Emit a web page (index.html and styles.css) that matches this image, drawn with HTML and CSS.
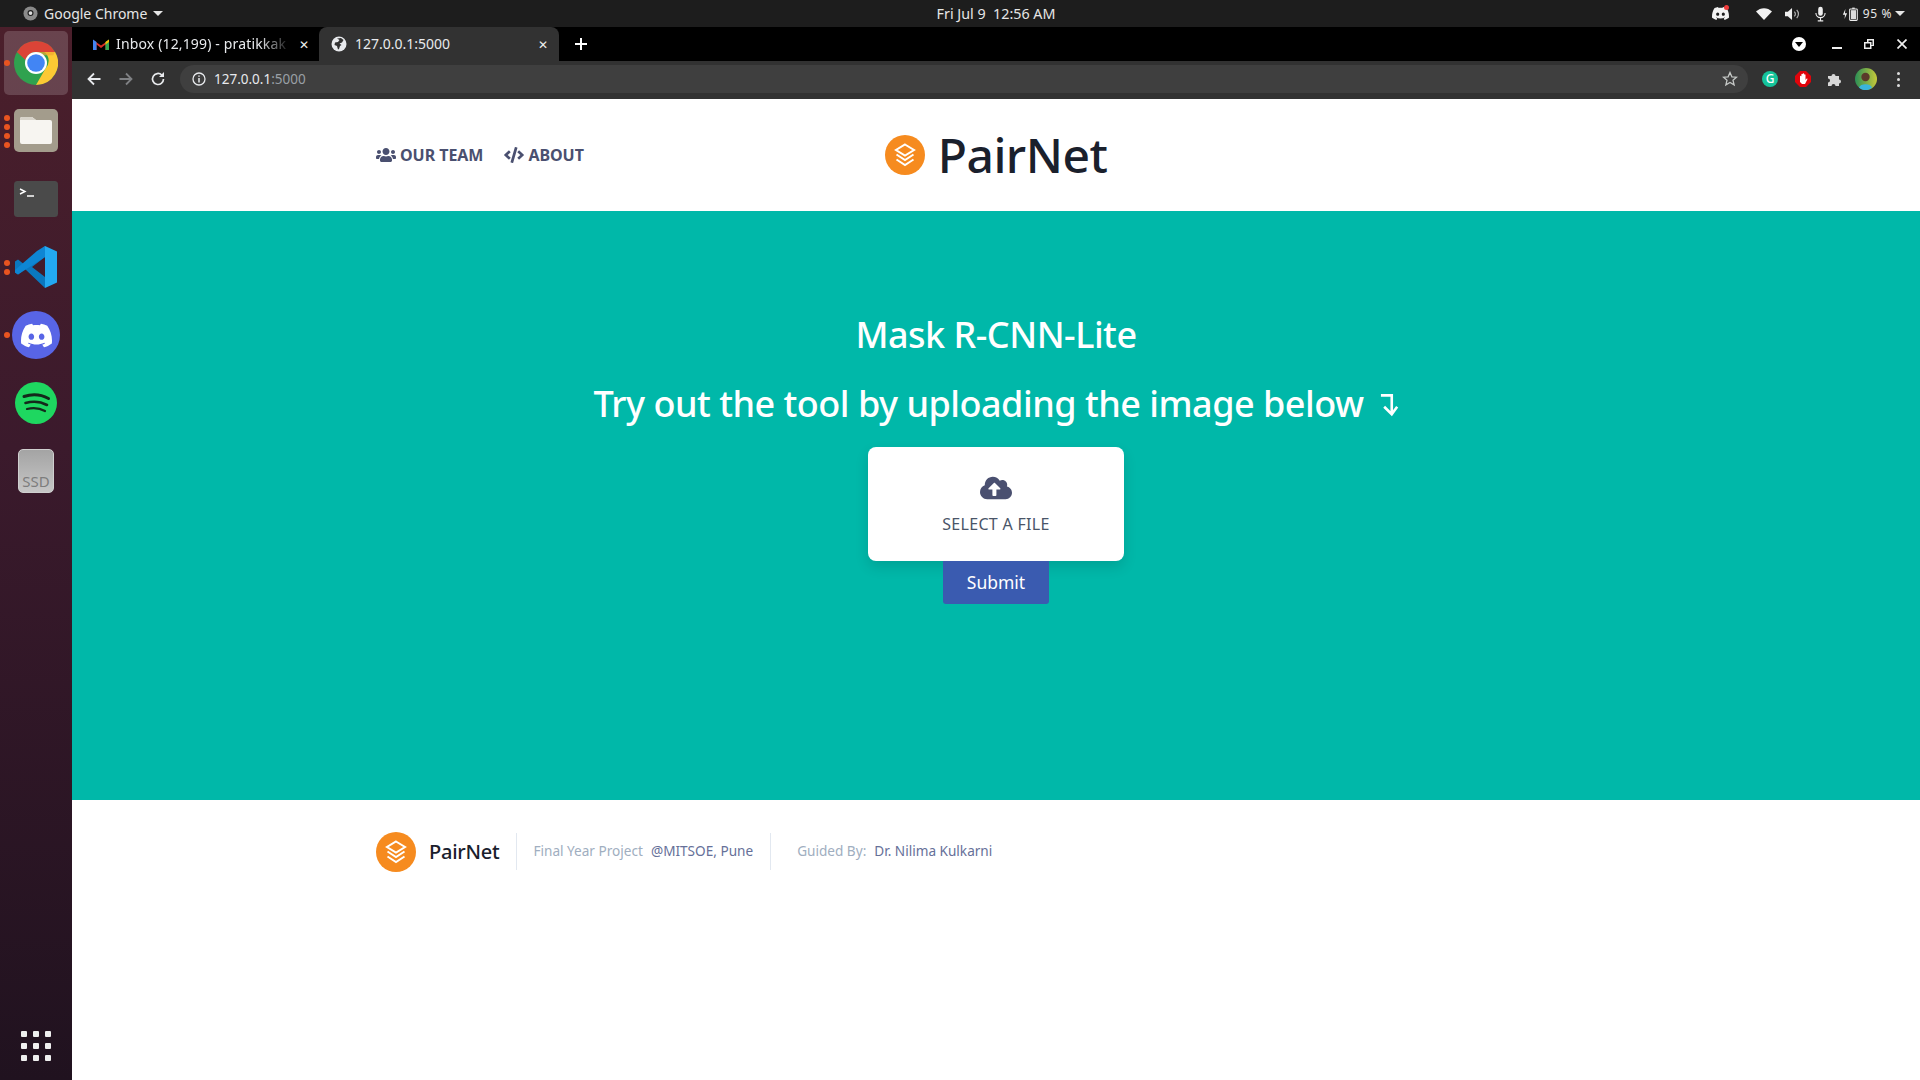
FILE: index.html
```html
<!DOCTYPE html>
<html lang="en">
<head>
<meta charset="utf-8">
<title>PairNet</title>
<link rel="stylesheet" href="styles.css">
</head>
<body>
<svg class="defs" width="0" height="0" aria-hidden="true">
  <symbol id="logo" viewBox="0 0 40 40">
    <circle cx="20" cy="20" r="20" fill="#f68b1f"/>
    <g fill="none" stroke="#fff" stroke-linejoin="miter">
      <path d="M20 9.500 29 15 20 20.500 11 15Z" stroke-width="2"/>
      <path d="M11.500 19.500 20 25 28.500 19.500" stroke-width="2"/>
      <path d="M11.500 24.500 20 30 28.500 24.500" stroke-width="2"/>
    </g>
  </symbol>
  <symbol id="discord" viewBox="0 0 24 24">
    <path fill="currentColor" d="M20.317 4.3698a19.7913 19.7913 0 00-4.8851-1.5152.0741.0741 0 00-.0785.0371c-.211.3753-.4447.8648-.6083 1.2495-1.8447-.2762-3.68-.2762-5.4868 0-.1636-.3933-.4058-.8742-.6177-1.2495a.077.077 0 00-.0785-.037 19.7363 19.7363 0 00-4.8852 1.515.0699.0699 0 00-.0321.0277C.5334 9.0458-.319 13.5799.0992 18.0578a.0824.0824 0 00.0312.0561c2.0528 1.5076 4.0413 2.4228 5.9929 3.0294a.0777.0777 0 00.0842-.0276c.4616-.6304.8731-1.2952 1.226-1.9942a.076.076 0 00-.0416-.1057c-.6528-.2476-1.2743-.5495-1.8722-.8923a.077.077 0 01-.0076-.1277c.1258-.0943.2517-.1923.3718-.2914a.0743.0743 0 01.0776-.0105c3.9278 1.7933 8.18 1.7933 12.0614 0a.0739.0739 0 01.0785.0095c.1202.099.246.1981.3728.2924a.077.077 0 01-.0066.1276 12.2986 12.2986 0 01-1.873.8914.0766.0766 0 00-.0407.1067c.3604.698.7719 1.3628 1.225 1.9932a.076.076 0 00.0842.0286c1.961-.6067 3.9495-1.5219 6.0023-3.0294a.077.077 0 00.0313-.0552c.5004-5.177-.8382-9.6739-3.5485-13.6604a.061.061 0 00-.0312-.0286zM8.02 15.3312c-1.1825 0-2.1569-1.0857-2.1569-2.419 0-1.3332.9555-2.4189 2.157-2.4189 1.2108 0 2.1757 1.0952 2.1568 2.419 0 1.3332-.9555 2.4189-2.1569 2.4189zm7.9748 0c-1.1825 0-2.1569-1.0857-2.1569-2.419 0-1.3332.9554-2.4189 2.1569-2.4189 1.2108 0 2.1757 1.0952 2.1568 2.419 0 1.3332-.946 2.4189-2.1568 2.4189Z"/>
  </symbol>
  <symbol id="chrome" viewBox="0 0 48 48">
    <circle cx="24" cy="24" r="24" fill="#2fa24f"/>
    <path d="M24 0a24 24 0 0 1 20.800 12H24a12 12 0 0 0-11.500 8.600L3.200 12A24 24 0 0 1 24 0Z" fill="#db4437"/>
    <path d="M44.800 12A24 24 0 0 1 24 48l10.400-18a12 12 0 0 0-1.400-18Z" fill="#fcc934"/>
    <path d="M24 12h20.800l-2 3.500H31Z" fill="#f0a830" opacity=".7"/>
    <circle cx="24" cy="24" r="12" fill="#fff"/>
    <circle cx="24" cy="24" r="9.600" fill="#4285f4"/>
  </symbol>
  <symbol id="globe" viewBox="0 0 16 16">
    <circle cx="8" cy="8" r="7.500" fill="#e8eaed"/>
    <path d="M6 2.500 8.500 4 7 6 4 6.500 3.500 9 6 10l1 3.500 1-.5 1-3 1.500-1L8.500 7.500 11 6.500 12.500 4 10 2Z" fill="#323232"/>
  </symbol>
</svg>

<div class="desktop">
  <header class="topbar">
    <div class="top-left">
      <svg class="top-chrome" viewBox="0 0 16 16"><circle cx="8" cy="8" r="7.500" fill="#8a8a8a"/><circle cx="8" cy="7.500" r="3.200" fill="#1d1d1d"/><circle cx="8" cy="7.500" r="2" fill="#ddd"/></svg>
      <span>Google Chrome</span>
      <i class="caret"></i>
    </div>
    <div class="top-center">Fri Jul 9 &nbsp;12:56 AM</div>
    <div class="top-right">
      <span class="tray-discord">
        <svg class="tray-icon-discord" viewBox="0 0 24 24"><use href="#discord"/></svg>
        <i class="notify"></i>
      </span>
      <svg class="tray-wifi" viewBox="0 0 16 12"><path d="M0 3.500C4.500-1 11.500-1 16 3.500L8 12Z" fill="#f2f2f2"/></svg>
      <svg class="tray-sound" viewBox="0 0 16 14"><path d="M0 4.500h3L7.500.5v13L3 9.500H0Z" fill="#eee"/><path d="M10 4.500a3.500 3.500 0 0 1 0 5M12.500 2.500a6.500 6.500 0 0 1 0 9" fill="none" stroke="#bbb" stroke-width="1.200"/></svg>
      <svg class="tray-mic" viewBox="0 0 12 16"><rect x="3.500" y="0" width="5" height="10" rx="2.500" fill="#eee"/><path d="M1 7a5 5 0 0 0 10 0M6 12v3.500M3 15.500h6" fill="none" stroke="#eee" stroke-width="1.200"/></svg>
      <svg class="tray-batt" viewBox="0 0 20 16"><path d="M4 2 1 9h2.500L3 14l3-7H3.500Z" fill="#eee"/><rect x="9" y="2" width="9" height="13.500" rx="1" fill="none" stroke="#eee" stroke-width="1.200"/><rect x="12" y="0.500" width="3" height="1.500" fill="#eee"/><rect x="10.500" y="3.500" width="6" height="10.500" fill="#ddd"/></svg>
      <span class="batt-text">95 %</span>
      <i class="caret"></i>
    </div>
  </header>

  <div class="workspace">
    <nav class="dock">
      <div class="dock-item active">
        <i class="dot"></i>
        <svg class="ic-44" viewBox="0 0 48 48"><use href="#chrome"/></svg>
      </div>
      <div class="dock-item">
        <span class="dots"><i></i><i></i><i></i><i></i></span>
        <svg class="ic-44" viewBox="0 0 44 44">
          <rect x="0" y="0" width="44" height="43" rx="5" fill="#a39c8c"/>
          <path d="M6 10a2 2 0 0 1 2-2h10l4 3h14a2 2 0 0 1 2 2v20a2 2 0 0 1-2 2H8a2 2 0 0 1-2-2Z" fill="#f7f5f1"/>
          <path d="M6 10a2 2 0 0 1 2-2h10l4 3H6Z" fill="#d8d4ca"/>
        </svg>
      </div>
      <div class="dock-item">
        <svg class="ic-term" viewBox="0 0 44 36">
          <rect width="44" height="36" rx="3.500" fill="#4a4a4a"/>
          <path d="M6 8l5 2.500-5 2.500" fill="none" stroke="#fff" stroke-width="1.400"/>
          <path d="M13 15h7" stroke="#fff" stroke-width="1.500"/>
        </svg>
      </div>
      <div class="dock-item">
        <span class="dots"><i></i><i></i></span>
        <svg class="ic-42" viewBox="0 0 42 42">
          <path d="M30 0 10 19 3 13.500 0 15.500v11L3 28.500 10 23 30 42V31L17 21 30 11Z" fill="#0a78c0"/>
          <path d="M3 28.500 0 26.500 0 24 22 5 30 0V11Z" fill="#0e86d4"/>
          <path d="M30 0 42 5.500v31L30 42Z" fill="#23a9f2"/>
        </svg>
      </div>
      <div class="dock-item">
        <i class="dot"></i>
        <span class="discord-badge"><svg class="discord-glyph" viewBox="0 0 24 24"><use href="#discord"/></svg></span>
      </div>
      <div class="dock-item">
        <svg class="ic-42" viewBox="0 0 42 42">
          <circle cx="21" cy="21" r="21" fill="#1ed760"/>
          <g fill="none" stroke="#14291b" stroke-linecap="round">
            <path d="M9 14.500c8-2.500 17-2 24.500 2" stroke-width="3"/>
            <path d="M10.500 21c7-2 15-1.500 21.500 2" stroke-width="2.600"/>
            <path d="M12 27c6-1.500 12.500-1 18 2" stroke-width="2.200"/>
          </g>
        </svg>
      </div>
      <div class="dock-item">
        <div class="ssd">SSD</div>
      </div>
      <div class="dock-item grid-item">
        <div class="apps">
          <i></i><i></i><i></i><i></i><i></i><i></i><i></i><i></i><i></i>
        </div>
      </div>
    </nav>

    <div class="browser">
      <div class="tabstrip">
        <div class="tab">
          <svg class="favicon" viewBox="0 0 16 12"><path d="M0 12V2l8 5.500L16 2v10h-3.500V6.500L8 10 3.500 6.500V12Z" fill="#d93025"/><path d="M0 12V1.500L3.500 4v8Z" fill="#4285f4"/><path d="M12.500 12V4L16 1.500V12Z" fill="#34a853"/><path d="M12.500 4 16 1.500V4l-3.500 2.500Z" fill="#fbbc04"/></svg>
          <span class="tab-title fade">Inbox (12,199) - pratikkak</span>
          <span class="tab-x">&#x2715;</span>
        </div>
        <div class="tab current">
          <svg class="favicon globe" viewBox="0 0 16 16"><use href="#globe"/></svg>
          <span class="tab-title">127.0.0.1:5000</span>
          <span class="tab-x">&#x2715;</span>
        </div>
        <svg class="newtab" viewBox="0 0 12 12"><path d="M6 0v12M0 6h12" stroke="#fff" stroke-width="2"/></svg>
        <div class="win-controls">
          <span class="media-btn"><i></i></span>
          <svg class="win-min" viewBox="0 0 10 2"><rect width="10" height="2" fill="#eee"/></svg>
          <svg class="win-max" viewBox="0 0 10 10"><path d="M3 0h7v7H7.500v3H0V3h3Zm1.500 1.500V3h3v3h1V1.500ZM1.500 4.500v4h4.500v-4Z" fill="#eee" fill-rule="evenodd"/></svg>
          <svg class="win-close" viewBox="0 0 10 10"><path d="M.5.500l9 9M9.500.5l-9 9" stroke="#eee" stroke-width="1.700"/></svg>
        </div>
      </div>

      <div class="toolbar">
        <svg class="tb-icon" viewBox="0 0 16 16"><path d="M14.500 8H2.500M8 2.500 2.500 8 8 13.500" fill="none" stroke="#e8eaed" stroke-width="1.800"/></svg>
        <svg class="tb-icon" viewBox="0 0 16 16"><path d="M1.500 8h12M8 2.500 13.500 8 8 13.500" fill="none" stroke="#7f8184" stroke-width="1.800"/></svg>
        <svg class="tb-icon" viewBox="0 0 16 16"><path d="M13.500 8A5.500 5.500 0 1 1 11.800 4" fill="none" stroke="#e8eaed" stroke-width="1.700"/><path d="M14 1v5H9Z" fill="#e8eaed"/></svg>
        <div class="omnibox">
          <svg class="info" viewBox="0 0 14 14"><circle cx="7" cy="7" r="6" fill="none" stroke="#e8eaed" stroke-width="1.300"/><path d="M7 6v4.500M7 3.500v1.300" stroke="#e8eaed" stroke-width="1.500"/></svg>
          <span class="url">127.0.0.1<span class="url-dim">:5000</span></span>
          <svg class="star" viewBox="0 0 16 16"><path d="M8 1.500l1.900 4.300 4.600.4-3.500 3 1.100 4.600L8 11.400l-4.100 2.400L5 9.200l-3.500-3 4.600-.4Z" fill="none" stroke="#c4c7c5" stroke-width="1.300"/></svg>
        </div>
        <div class="extensions">
          <span class="ext-g">G</span>
          <svg class="ext-hand" viewBox="0 0 16 16"><path d="M5 0h6l5 5v6l-5 5H5l-5-5V5Z" fill="#e0040b"/><path d="M5 11V5.500a.7.7 0 0 1 1.400 0V3.500a.7.7 0 0 1 1.400 0V3a.7.7 0 0 1 1.400 0v.800a.7.7 0 0 1 1.300 0V9l1-1.200c.7-.5 1.200.1.800.7L10 13H7Z" fill="#fff"/></svg>
          <svg class="ext-puzzle" viewBox="0 0 16 16"><path d="M1 5h3.500a2 2 0 0 1 4 0H12v3.500a2 2 0 0 1 0 4V15H8.500a2 2 0 0 0-4 0H1v-3.500a2 2 0 0 0 0-4Z" fill="#d8d8d8"/></svg>
          <svg class="avatar" viewBox="0 0 22 22"><defs><linearGradient id="ava" x1="0" y1="0" x2="1" y2="0"><stop offset="0" stop-color="#2b8f56"/><stop offset="1" stop-color="#c5c83a"/></linearGradient></defs><circle cx="11" cy="11" r="11" fill="url(#ava)"/><circle cx="10.500" cy="9" r="4.200" fill="#5a3a2a"/><path d="M4 19.500C5 15 16 15 17 19.500 13 23 8 23 4 19.500Z" fill="#3ab5dc"/></svg>
          <span class="kebab"><i></i><i></i><i></i></span>
        </div>
      </div>

      <main class="page">
        <section class="site-head">
          <div class="site-nav">
            <a class="nav-link">
              <svg class="ic-users" viewBox="0 0 640 512"><path fill="currentColor" d="M96 224c35.300 0 64-28.700 64-64s-28.700-64-64-64-64 28.700-64 64 28.700 64 64 64zm448 0c35.300 0 64-28.700 64-64s-28.700-64-64-64-64 28.700-64 64 28.700 64 64 64zm32 32h-64c-17.600 0-33.500 7.100-45.100 18.600 40.300 22.100 68.900 62 75.100 109.400h66c17.700 0 32-14.300 32-32v-32c0-35.300-28.700-64-64-64zm-256 0c61.900 0 112-50.100 112-112S381.900 32 320 32 208 82.100 208 144s50.100 112 112 112zm76.800 32h-8.300c-20.800 10-43.900 16-68.500 16s-47.600-6-68.500-16h-8.300C179.600 288 128 339.600 128 403.200V432c0 26.500 21.500 48 48 48h288c26.500 0 48-21.500 48-48v-28.800c0-63.600-51.600-115.200-115.200-115.200zm-223.700-13.400C161.500 263.100 145.600 256 128 256H64c-35.300 0-64 28.700-64 64v32c0 17.700 14.300 32 32 32h65.900c6.300-47.400 34.900-87.300 75.200-109.400z"/></svg>
              <span>OUR TEAM</span>
            </a>
            <a class="nav-link">
              <svg class="ic-users" viewBox="0 0 640 512"><path fill="currentColor" d="M278.900 511.500l-61-17.700c-6.400-1.800-10-8.500-8.200-14.900L346.200 8.700c1.800-6.400 8.500-10.100 14.900-8.200l61 17.700c6.400 1.800 10 8.500 8.200 14.900L293.800 503.300c-1.900 6.400-8.500 10.100-14.900 8.200zm-114-112.200l43.500-46.400c4.600-4.900 4.300-12.700-.8-17.200L117 256l90.600-79.700c5.100-4.500 5.500-12.300.8-17.200l-43.500-46.400c-4.500-4.800-12.100-5.100-17-.5L3.800 247.200c-5.100 4.700-5.100 12.800 0 17.500l144.100 135.100c4.900 4.600 12.500 4.400 17-.5zm327.200.6l144.100-135.100c5.100-4.700 5.100-12.800 0-17.500L492.100 112.100c-4.800-4.500-12.400-4.300-17 .5L431.600 159c-4.600 4.900-4.300 12.700.8 17.200L523 256l-90.600 79.700c-5.100 4.500-5.500 12.300-.8 17.200l43.500 46.400c4.500 4.900 12.100 5.100 17 .6z"/></svg>
              <span>ABOUT</span>
            </a>
          </div>
          <div class="brand">
            <svg class="brand-logo" viewBox="0 0 40 40"><use href="#logo"/></svg>
            <span class="brand-name">PairNet</span>
          </div>
          <div></div>
        </section>

        <section class="hero">
          <h1 class="hero-title">Mask R-CNN-Lite</h1>
          <h2 class="hero-sub">Try out the tool by uploading the image below <svg class="hero-arrow" viewBox="0 0 18 24"><path d="M2 4h10v16M5 14.500l7 7 5-7" fill="none" stroke="#fff" stroke-width="2.400"/></svg></h2>
          <form class="upload">
            <label class="file-card">
              <svg class="cloud" viewBox="0 0 640 512"><path fill="currentColor" d="M537.600 226.600c4.100-10.700 6.400-22.400 6.400-34.600 0-53-43-96-96-96-19.700 0-38.100 6-53.300 16.200C367 64.200 315.300 32 256 32c-88.400 0-160 71.600-160 160 0 2.700.1 5.400.2 8.100C40.200 219.800 0 273.200 0 336c0 79.500 64.500 144 144 144h368c70.700 0 128-57.300 128-128 0-61.900-44-113.600-102.400-125.400zM393.400 288H328v112c0 8.800-7.200 16-16 16h-48c-8.800 0-16-7.200-16-16V288h-65.400c-14.300 0-21.400-17.200-11.300-27.300l105.400-105.400c6.200-6.200 16.400-6.200 22.600 0l105.400 105.400c10.100 10.100 2.900 27.300-11.300 27.300z"/></svg>
              <span class="file-label">SELECT A FILE</span>
            </label>
            <button class="submit" type="button">Submit</button>
          </form>
        </section>

        <footer class="site-foot">
          <div class="foot-brand">
            <svg class="brand-logo" viewBox="0 0 40 40"><use href="#logo"/></svg>
            <span class="foot-name">PairNet</span>
          </div>
          <div class="foot-cell first"><span class="muted">Final Year Project</span><span class="strong">@MITSOE, Pune</span></div>
          <div class="foot-cell"><span class="muted">Guided By:</span><span class="strong">Dr. Nilima Kulkarni</span></div>
        </footer>
      </main>
    </div>
  </div>
</div>
</body>
</html>
```
FILE: styles.css
```css
* { box-sizing: border-box; }
html, body { margin: 0; height: 100%; overflow: hidden; }
body { font-family: "Noto Sans", "Open Sans", sans-serif; background: #fff; }
.defs { position: absolute; }
svg { display: block; flex: none; }

.desktop { display: flex; flex-direction: column; width: 1920px; height: 1080px; }

/* top bar */
.topbar { height: 27px; background: #1d1d1d; color: #e6e6e6; display: grid; grid-template-columns: 1fr auto 1fr; align-items: center; font-size: 14px; padding-left: 23px; padding-right: 15px; }
.top-left { display: flex; align-items: center; gap: 6px; }
.top-chrome { width: 15px; height: 15px; }
.caret { display: block; width: 0; height: 0; border-left: 5px solid transparent; border-right: 5px solid transparent; border-top: 5px solid #e6e6e6; }
.top-center { font-size: 14.300px; padding-left: 64px; }
.top-right { display: flex; justify-content: flex-end; align-items: center; }
.tray-discord { position: relative; display: block; margin-right: 27px; }
.tray-icon-discord { width: 17px; height: 17px; color: #f2f2f2; }
.notify { position: absolute; right: 0; top: 0; width: 5px; height: 5px; border-radius: 50%; background: #ef3b3b; }
.tray-wifi { width: 16px; height: 12px; margin-right: 13px; }
.tray-sound { width: 15px; height: 14px; margin-right: 15px; }
.tray-mic { width: 11px; height: 16px; margin-right: 16px; }
.tray-batt { width: 17px; height: 16px; margin-right: 4px; }
.batt-text { font-size: 12px; letter-spacing: .6px; margin-right: 3px; }

.workspace { flex: 1; display: flex; min-height: 0; }

/* dock */
.dock { width: 72px; flex: none; background: linear-gradient(180deg, #4b1f2b 0%, #3b1a2c 40%, #20121f 100%); display: flex; flex-direction: column; align-items: center; padding: 4px 0 2px; gap: 4px; }
.dock-item { position: relative; width: 64px; height: 64px; display: flex; align-items: center; justify-content: center; border-radius: 5px; flex: none; }
.dock-item.active { background: rgba(255, 255, 255, .17); }
.grid-item { margin-top: auto; }
.dot { position: absolute; left: 0; top: 29px; width: 6px; height: 6px; border-radius: 50%; background: #e95420; }
.dots { position: absolute; left: 0; top: 0; bottom: 0; display: flex; flex-direction: column; justify-content: center; gap: 3px; }
.dots i { display: block; width: 6px; height: 6px; border-radius: 50%; background: #e95420; }
.ic-44 { width: 44px; height: 44px; }
.ic-42 { width: 42px; height: 42px; }
.ic-term { width: 44px; height: 36px; }
.discord-badge { width: 48px; height: 48px; border-radius: 50%; background: #5865e6; display: flex; align-items: center; justify-content: center; }
.discord-glyph { width: 31px; height: 31px; color: #fff; }
.ssd { width: 36px; height: 44px; border-radius: 5px; background: linear-gradient(180deg, #a4a4a4, #c6c6c6); border: 1px solid #cfcfcf; color: #7d7d7d; font-size: 15px; display: flex; align-items: flex-end; justify-content: center; line-height: 22px; }
.apps { display: grid; grid-template-columns: repeat(3, 6px); grid-auto-rows: 6px; gap: 6px; }
.apps i { display: block; background: #efefef; border-radius: 1px; }

/* browser */
.browser { flex: 1; display: flex; flex-direction: column; min-width: 0; }
.tabstrip { height: 34px; background: #000; display: flex; align-items: stretch; color: #e8eaed; font-size: 14px; padding-left: 2px; }
.tab { width: 245px; display: flex; align-items: center; padding-left: 19px; padding-right: 6px; }
.tab.current { width: 240px; background: #323232; border-radius: 8px 8px 0 0; padding-left: 12px; padding-right: 7px; }
.favicon { width: 16px; height: 12px; margin-right: 7px; }
.favicon.globe { width: 16px; height: 16px; margin-right: 8px; }
.tab-title { flex: 1; min-width: 0; white-space: nowrap; overflow: hidden; padding-bottom: 2px; }
.tab-title.fade { letter-spacing: .15px; -webkit-mask-image: linear-gradient(90deg, #000 82%, transparent 100%); mask-image: linear-gradient(90deg, #000 82%, transparent 100%); }
.tab-x { width: 18px; flex: none; text-align: center; font-size: 12px; color: #eee; margin-left: 4px; }
.newtab { width: 12px; height: 12px; align-self: center; margin-left: 16px; }
.win-controls { margin-left: auto; display: flex; align-items: center; padding-right: 13px; }
.media-btn { width: 14px; height: 14px; border-radius: 50%; background: #fff; display: flex; align-items: center; justify-content: center; margin-right: 26px; }
.media-btn i { display: block; width: 0; height: 0; border-left: 4px solid transparent; border-right: 4px solid transparent; border-top: 5px solid #000; }
.win-min { width: 10px; height: 2px; margin-right: 22px; margin-top: 8px; }
.win-max { width: 10px; height: 10px; margin-right: 23px; }
.win-close { width: 10px; height: 10px; }

.toolbar { height: 38px; background: #323232; display: flex; align-items: center; padding-left: 14px; padding-bottom: 2px; }
.tb-icon { width: 16px; height: 16px; margin-right: 16px; }
.omnibox { width: 1568px; height: 28px; margin-left: -2px; border-radius: 14px; background: #3f3f3f; display: flex; align-items: center; padding-left: 12px; padding-right: 10px; font-size: 13.500px; color: #e8eaed; }
.info { width: 14px; height: 14px; margin-right: 8px; }
.url-dim { color: #9aa0a6; }
.star { width: 16px; height: 16px; margin-left: auto; }
.extensions { flex: 1; display: flex; align-items: center; padding-left: 14px; }
.ext-g { width: 16px; height: 16px; border-radius: 50%; background: #15c39a; color: #fff; font-size: 12px; font-weight: 500; line-height: 16px; text-align: center; margin-right: 17px; }
.ext-hand { width: 16px; height: 16px; margin-right: 16px; }
.ext-puzzle { width: 16px; height: 16px; margin-right: 12px; }
.avatar { width: 22px; height: 22px; margin-right: 20px; }
.kebab { display: flex; flex-direction: column; gap: 3px; }
.kebab i { display: block; width: 3px; height: 3px; border-radius: 50%; background: #ddd; }

/* page */
.page { flex: 1; display: flex; flex-direction: column; background: #fff; min-height: 0; }
.site-head { height: 112px; padding: 0 304px; display: grid; grid-template-columns: 1fr auto 1fr; align-items: center; }
.site-nav { display: flex; gap: 21px; }
.nav-link { display: flex; align-items: center; gap: 4px; font-size: 16px; font-weight: 700; letter-spacing: -.05px; color: #4a5070; }
.ic-users { width: 20px; height: 16px; }
.brand { display: flex; align-items: center; gap: 13px; }
.brand-logo { width: 40px; height: 40px; }
.brand-name { font-size: 48px; font-weight: 500; letter-spacing: -.5px; color: #1a202c; line-height: 1; }

.hero { height: 589px; background: #00b8a9; display: flex; flex-direction: column; align-items: center; padding-top: 100px; color: #fff; }
.hero-title { margin: 0; font-size: 36px; font-weight: 500; letter-spacing: -.5px; line-height: 48px; }
.hero-sub { margin: 21px 0 0; font-size: 36px; font-weight: 500; letter-spacing: -.5px; line-height: 48px; display: flex; align-items: center; gap: 14px; }
.hero-arrow { width: 21px; height: 26px; }
.upload { display: flex; flex-direction: column; align-items: center; margin-top: 19px; }
.file-card { width: 256px; height: 114px; background: #fff; border-radius: 8px; box-shadow: 0 6px 14px rgba(0, 0, 0, .12); display: flex; flex-direction: column; align-items: center; padding-top: 28px; color: #4a5070; }
.cloud { width: 32px; height: 26px; }
.file-label { font-size: 16px; letter-spacing: .3px; line-height: 24px; margin-top: 11px; color: #4a5568; }
.submit { width: 106px; height: 43px; border: 0; border-radius: 0 0 3px 3px; background: #3a5bb0; color: #fff; font: 400 17.500px "Noto Sans", sans-serif; padding: 0 0 2px; }

.site-foot { flex: 1; padding: 32px 304px 0; display: flex; align-items: flex-start; font-size: 13.600px; }
.foot-brand { display: flex; align-items: center; gap: 13px; height: 40px; padding-right: 17px; }
.foot-name { font-size: 20px; font-weight: 500; letter-spacing: -.25px; color: #1a202c; padding-bottom: 2px; }
.foot-cell { height: 37px; margin-top: 1px; display: flex; align-items: center; gap: 8px; padding: 0 17px 2px 26px; }
.foot-cell.first { border-left: 1px solid #e2e8f0; border-right: 1px solid #e2e8f0; padding-left: 16px; }
.muted { color: #a0aec0; }
.strong { color: #667099; }
```
